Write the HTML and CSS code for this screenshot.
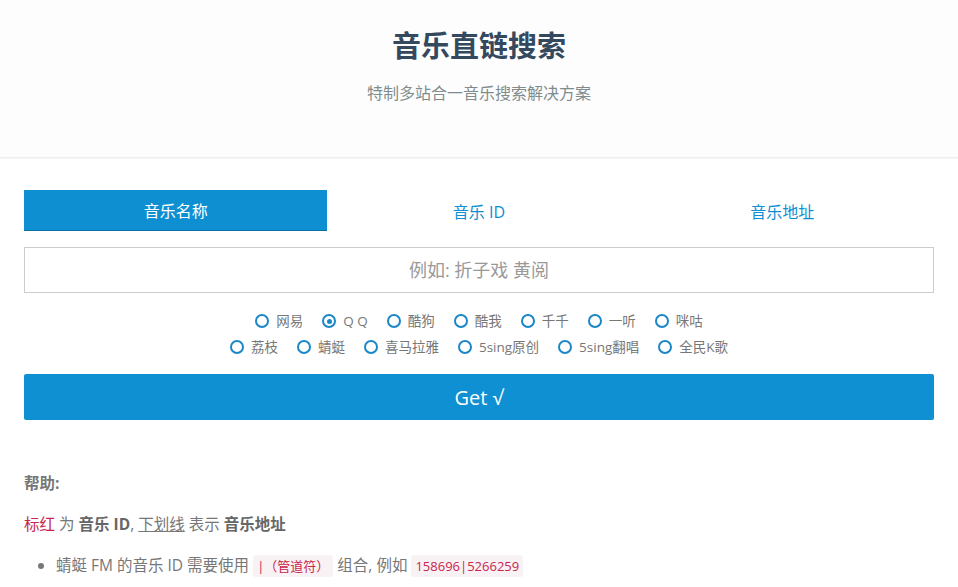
FILE: index.html
```html
<!DOCTYPE html>
<html lang="zh-CN">
<head>
    <meta charset="UTF-8">
    <meta name="viewport" content="width=device-width, initial-scale=1.0">
    <title>音乐直链搜索</title>
    <link rel="stylesheet" href="styles.css">
</head>
<body>
    <header class="page-header">
        <h1>音乐直链搜索</h1>
        <p class="subtitle">特制多站合一音乐搜索解决方案</p>
    </header>

    <main class="main">
        <div class="tabs">
            <button class="tab active">音乐名称</button>
            <button class="tab">音乐 ID</button>
            <button class="tab">音乐地址</button>
        </div>

        <input class="search-input" type="text" placeholder="例如: 折子戏 黄阅">

        <div class="sites">
            <div class="site-row">
                <label class="site"><input type="radio" name="site"><span class="dot"></span>网易</label>
                <label class="site"><input type="radio" name="site" checked><span class="dot"></span>Q Q</label>
                <label class="site"><input type="radio" name="site"><span class="dot"></span>酷狗</label>
                <label class="site"><input type="radio" name="site"><span class="dot"></span>酷我</label>
                <label class="site"><input type="radio" name="site"><span class="dot"></span>千千</label>
                <label class="site"><input type="radio" name="site"><span class="dot"></span>一听</label>
                <label class="site"><input type="radio" name="site"><span class="dot"></span>咪咕</label>
            </div>
            <div class="site-row">
                <label class="site"><input type="radio" name="site"><span class="dot"></span>荔枝</label>
                <label class="site"><input type="radio" name="site"><span class="dot"></span>蜻蜓</label>
                <label class="site"><input type="radio" name="site"><span class="dot"></span>喜马拉雅</label>
                <label class="site"><input type="radio" name="site"><span class="dot"></span>5sing原创</label>
                <label class="site"><input type="radio" name="site"><span class="dot"></span>5sing翻唱</label>
                <label class="site"><input type="radio" name="site"><span class="dot"></span>全民K歌</label>
            </div>
        </div>

        <button class="get-button">Get √</button>

        <section class="help">
            <p class="help-title">帮助:</p>
            <p><span class="mark-red">标红</span> 为 <b>音乐 ID</b>, <u>下划线</u> 表示 <b>音乐地址</b></p>
            <ul>
                <li>蜻蜓 FM 的音乐 ID 需要使用 <code>|（管道符）</code> 组合, 例如 <code>158696|5266259</code></li>
            </ul>
        </section>
    </main>
</body>
</html>
```

FILE: styles.css
```css
body {
    margin: 0;
    font-family: "Open Sans", "Noto Sans CJK SC", sans-serif;
    color: #666;
    background: #fff;
}

.page-header {
    text-align: center;
    padding: 26px 0 52px;
    background: #fdfdfd;
    border-bottom: 1px solid #eee;
    box-shadow: 0 1px 1px rgba(0, 0, 0, 0.03);
}
.page-header h1 {
    margin: 0;
    font-size: 29px;
    font-weight: 700;
    color: #34495e;
    line-height: 40px;
}
.subtitle {
    margin: 15px 0 0;
    font-size: 16px;
    color: #7f8c8d;
    line-height: 24px;
}

.main {
    padding: 32px 24px 0;
}

.tabs {
    display: grid;
    grid-template-columns: repeat(3, 1fr);
}
.tab {
    height: 41px;
    border: none;
    background: transparent;
    color: #0e8fd2;
    font-family: inherit;
    font-size: 16px;
    cursor: pointer;
}
.tab.active {
    background: #0e8fd2;
    color: #fff;
    border-bottom: 1px solid #0b6fa3;
}

.search-input {
    display: block;
    box-sizing: border-box;
    width: 100%;
    height: 46px;
    margin-top: 16px;
    border: 1px solid #ccc;
    text-align: center;
    font-family: inherit;
    font-size: 18px;
    color: #555;
    outline: none;
}
.search-input::placeholder {
    color: #999;
}

.sites {
    margin-top: 18px;
    display: flex;
    flex-direction: column;
    align-items: center;
    gap: 6px;
}
.site-row {
    display: flex;
    gap: 19px;
}
.site {
    display: flex;
    align-items: center;
    gap: 7px;
    font-size: 13.5px;
    color: #777;
    line-height: 20px;
    cursor: pointer;
}
.site input {
    display: none;
}
.dot {
    box-sizing: border-box;
    width: 14px;
    height: 14px;
    border: 2.5px solid #1a87c9;
    border-radius: 50%;
    display: flex;
    align-items: center;
    justify-content: center;
}
.site input:checked + .dot::after {
    content: "";
    width: 5px;
    height: 5px;
    border-radius: 50%;
    background: #1a87c9;
}

.get-button {
    display: block;
    width: 100%;
    height: 46px;
    margin-top: 17px;
    border: none;
    border-radius: 2px;
    background: #0f90d2;
    color: #fff;
    font-family: inherit;
    font-size: 20px;
    cursor: pointer;
}

.help {
    margin-top: 52px;
    font-size: 15.5px;
    color: #777;
}
.help p {
    margin: 0 0 19px;
    line-height: 22px;
}
.help-title {
    font-weight: 700;
}
.help b {
    color: #666;
}
.mark-red {
    color: #c7254e;
}
.help u {
    color: #777;
}
.help ul {
    margin: 0;
    padding-left: 32px;
    line-height: 22px;
}
code {
    font-family: "Open Sans", "Noto Sans CJK SC", sans-serif;
    font-size: 13px;
    color: #c7254e;
    background: #f9f2f4;
    padding: 2px 4px;
    border-radius: 3px;
}
```
